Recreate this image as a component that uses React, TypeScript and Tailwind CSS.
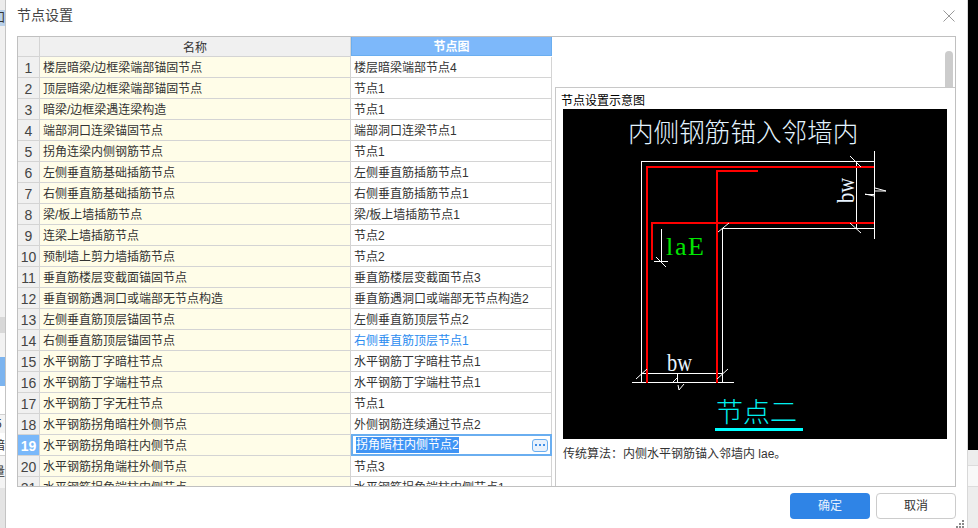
import React from "react";

const rows = [
  ["楼层暗梁/边框梁端部锚固节点", "楼层暗梁端部节点4"],
  ["顶层暗梁/边框梁端部锚固节点", "节点1"],
  ["暗梁/边框梁遇连梁构造", "节点1"],
  ["端部洞口连梁锚固节点", "端部洞口连梁节点1"],
  ["拐角连梁内侧钢筋节点", "节点1"],
  ["左侧垂直筋基础插筋节点", "左侧垂直筋插筋节点1"],
  ["右侧垂直筋基础插筋节点", "右侧垂直筋插筋节点1"],
  ["梁/板上墙插筋节点", "梁/板上墙插筋节点1"],
  ["连梁上墙插筋节点", "节点2"],
  ["预制墙上剪力墙插筋节点", "节点2"],
  ["垂直筋楼层变截面锚固节点", "垂直筋楼层变截面节点3"],
  ["垂直钢筋遇洞口或端部无节点构造", "垂直筋遇洞口或端部无节点构造2"],
  ["左侧垂直筋顶层锚固节点", "左侧垂直筋顶层节点2"],
  ["右侧垂直筋顶层锚固节点", "右侧垂直筋顶层节点1"],
  ["水平钢筋丁字暗柱节点", "水平钢筋丁字暗柱节点1"],
  ["水平钢筋丁字端柱节点", "水平钢筋丁字端柱节点1"],
  ["水平钢筋丁字无柱节点", "节点1"],
  ["水平钢筋拐角暗柱外侧节点", "外侧钢筋连续通过节点2"],
  ["水平钢筋拐角暗柱内侧节点", "拐角暗柱内侧节点2"],
  ["水平钢筋拐角端柱外侧节点", "节点3"],
  ["水平钢筋拐角端柱内侧节点", "水平钢筋拐角端柱内侧节点1"],
];

const serif = "'Liberation Serif', 'Noto Sans CJK SC', serif";

// 节点示意图, coordinates are page pixels minus the image origin
const Diagram = () => (
  <svg width="384" height="330" viewBox="563 109 384 330" className="block bg-black" shapeRendering="crispEdges">
    <text x="628" y="142" fontSize="25.6" fontWeight="300" fill="#e4f4ff" fontFamily={serif}>
      内侧钢筋锚入邻墙内
    </text>

    {/* white wall outline */}
    <g stroke="#fff" fill="none" strokeWidth="1">
      <path d="M641.5 383V161.5H874.5" />
      <path d="M722.5 383V228.5H874.5" />
      <path d="M661.5 263V228.5" />
      <path d="M856.5 161.5V229" />
      <path d="M874.5 151V239" />
      <path d="M632 382.5H734" />
      <path d="M641.5 373.5H722.5" />
      <path d="M677.5 374V383" />
      <path d="M654 261.5H668" />
      <path d="M865 194.5H874" />
    </g>

    {/* red rebar */}
    <g fill="#f00">
      <rect x="646" y="166" width="2" height="217" />
      <rect x="646" y="166" width="228" height="2" />
      <rect x="716" y="170" width="2" height="213" />
      <rect x="716" y="170" width="42" height="2" />
      <rect x="651" y="222" width="223" height="2" />
      <rect x="651" y="222" width="2" height="38" />
    </g>

    {/* dimension ticks */}
    <g stroke="#fff" fill="none" strokeWidth="1" shapeRendering="auto">
      <path d="M850 156L861 167" />
      <path d="M850 223L861 233" />
      <path d="M656 257L666 267" />
      <path d="M718 232L729 223" />
      <path d="M636 379L647 369" />
      <path d="M717 379L728 369" />
      <path d="M672 383L677 378" />
      <path d="M678 385L679 390L684 384" />
      <path d="M875 188L886 191H875" />
      <path d="M865 194L874 196" />
    </g>

    <text x="666" y="255" fontSize="26" fill="#00e600" fontFamily={serif} textLength="38" lengthAdjust="spacing">laE</text>
    <text x="667" y="371" fontSize="26" fill="#e8f4ff" fontFamily={serif} textLength="25" lengthAdjust="spacingAndGlyphs">bw</text>
    <text x="0" y="0" fontSize="26" fill="#e8f4ff" fontFamily={serif} textLength="25" lengthAdjust="spacingAndGlyphs" transform="translate(854 203) rotate(-90)">bw</text>

    <text x="716" y="422" fontSize="27" fontWeight="300" fill="#00f0f0" fontFamily={serif}>节点二</text>
    <rect x="715" y="428" width="88" height="3" fill="#0ff" />
  </svg>
);

const LeftStrip = () => (
  <div className="w-[6px] shrink-0 flex flex-col overflow-hidden bg-[#ececec] border-r border-[#c4c4c4] text-[12px] text-[#333]">
    <div className="h-[10px]" />
    <div className="h-[16px] bg-[#b9d1ea] leading-[16px] whitespace-nowrap -ml-[7px]">囗</div>
    <div className="h-[291px] bg-[#f0f0f0]" />
    <div className="h-[16px] bg-[#d8d8d8]" />
    <div className="h-[24px] bg-[#f2f2f2]" />
    <div className="h-[29px] bg-[#7cb4ef]" />
    <div className="h-[29px] bg-white border-b border-[#d0d0d0]" />
    <div className="h-[18px] bg-[#f4f4f4] leading-[18px] whitespace-nowrap -ml-[5px]">5</div>
    <div className="h-[23px] bg-white border-b border-[#d0d0d0] leading-[26px] whitespace-nowrap -ml-[7px]">暗</div>
    <div className="h-[32px] bg-[#f4f4f4] leading-[32px] whitespace-nowrap -ml-[7px]">量</div>
    <div className="flex-1 bg-[#e4e4e4]" />
  </div>
);

const RightStrip = () => (
  <div className="w-[11px] shrink-0 flex flex-col border-l border-[#d8d8d8]">
    <div className="h-[450px] bg-black" />
    <div className="flex-1 bg-[#ededed] flex flex-col">
      <div className="h-[16px] border-b border-[#dcdcdc]" />
      <div className="h-[21px] bg-[#f8f8f8] border-b border-[#dcdcdc]" />
    </div>
  </div>
);

export default function App() {
  return (
    <div className="w-[978px] h-[528px] flex overflow-hidden bg-white text-[12px] text-[#333] font-['Liberation_Sans','Noto_Sans_CJK_SC',sans-serif]">
      <LeftStrip />

      <div className="relative flex-1 flex flex-col bg-white">
        {/* title bar */}
        <header className="h-[36px] shrink-0 flex items-center justify-between pl-[11px] pr-[12px]">
          <span className="text-[14px] text-[#444] -mt-[5px]">节点设置</span>
          <svg width="12" height="12" viewBox="0 0 12 12" className="-mt-[5px]" stroke="#999" fill="none">
            <path d="M0.5 0.5L11.5 11.5M11.5 0.5L0.5 11.5" />
          </svg>
        </header>

        {/* body */}
        <div className="ml-[11px] w-[939px] h-[451px] shrink-0 flex border border-[#c0c0c0] overflow-hidden">
          <div className="w-[534px] shrink-0 flex flex-col">
            <div className="flex h-[20px] shrink-0">
              <div className="w-[22px] bg-[#f0f0f0] border-r border-b border-[#d4d4d4]" />
              <div className="w-[311px] bg-[#f0f0f0] border-r border-b border-[#d4d4d4] flex items-center justify-center pt-[2px]">名称</div>
              <div className="flex-1 -mt-px h-[20px] bg-[#7db8fa] border border-[#6aaef0] flex items-center justify-center pt-[2px] font-bold text-white">节点图</div>
            </div>
            {rows.map(([name, node], i) => (
              <div key={name} className="flex h-[21px] shrink-0">
                <div
                  className={
                    i === 18
                      ? "w-[22px] shrink-0 bg-[#7ab8fa] border-r border-b border-[#d4d4d4] flex items-center justify-center pt-[2px] text-[14px] font-bold text-white"
                      : "w-[22px] shrink-0 bg-[#f0f0f0] border-r border-b border-[#d4d4d4] flex items-center justify-center pt-[2px] text-[14px] text-[#444]"
                  }
                >
                  {i + 1}
                </div>
                <div className="w-[311px] shrink-0 bg-[#fffde8] border-r border-b border-[#d4d4d4] flex items-center pl-[3px] pt-[2px]">{name}</div>
                {i === 18 ? (
                  <div className="flex-1 -mt-px h-[22px] bg-white border-2 border-[#6aaef0] flex items-center justify-between pl-[3px] pr-[2px]">
                    <span className="bg-[#3f94f5] text-white h-[16px] leading-[16px]">{node}</span>
                    <span className="w-[16px] h-[13px] rounded-[3px] bg-[#e8f1fc] border border-[#6aaef0] flex items-center justify-center gap-[2px]">
                      <i className="w-[2px] h-[2px] bg-[#3f8fe8]" />
                      <i className="w-[2px] h-[2px] bg-[#3f8fe8]" />
                      <i className="w-[2px] h-[2px] bg-[#3f8fe8]" />
                    </span>
                  </div>
                ) : (
                  <div className={i === 13 ? "flex-1 border-r border-b border-[#d4d4d4] flex items-center pl-[3px] pt-[2px] text-[#2b8cf0]" : "flex-1 border-r border-b border-[#d4d4d4] flex items-center pl-[3px] pt-[2px]"}>
                    {node}
                  </div>
                )}
              </div>
            ))}
          </div>

          {/* right side: scrollbar stub and preview panel */}
          <div className="flex-1 flex flex-col min-w-0">
            <div className="h-[50px] shrink-0 flex justify-end items-end pr-[2px]">
              <div className="w-[8px] h-[36px] rounded-t-[4px] bg-[#cccccc]" />
            </div>
            <div className="flex-1 ml-[3px] border-t border-l border-[#c8c8c8] pl-[5px] pt-[5px] min-h-0">
              <div className="h-[16px] leading-[16px] text-black">节点设置示意图</div>
              <div className="ml-[2px]">
                <Diagram />
              </div>
              <p className="ml-[2px] mt-[7px] leading-[16px]">传统算法：内侧水平钢筋锚入邻墙内 lae。</p>
            </div>
          </div>
        </div>

        {/* footer */}
        <footer className="flex-1 flex justify-end items-start pt-[6px] pr-[11px] gap-[6px]">
          <button type="button" className="w-[80px] h-[26px] rounded-[4px] bg-[#2f84e6] text-[#e8f2fd]">确定</button>
          <button type="button" className="w-[80px] h-[26px] rounded-[4px] bg-white border border-[#cccccc] text-[#333]">取消</button>
        </footer>

        {/* resize grip */}
        <svg width="8" height="8" viewBox="0 0 8 8" className="absolute right-[3px] bottom-0" fill="#8a8a8a">
          <rect x="6" y="0" width="2" height="2" />
          <rect x="3" y="3" width="2" height="2" />
          <rect x="6" y="3" width="2" height="2" />
          <rect x="0" y="6" width="2" height="2" />
          <rect x="3" y="6" width="2" height="2" />
          <rect x="6" y="6" width="2" height="2" />
        </svg>
      </div>

      <RightStrip />
    </div>
  );
}
